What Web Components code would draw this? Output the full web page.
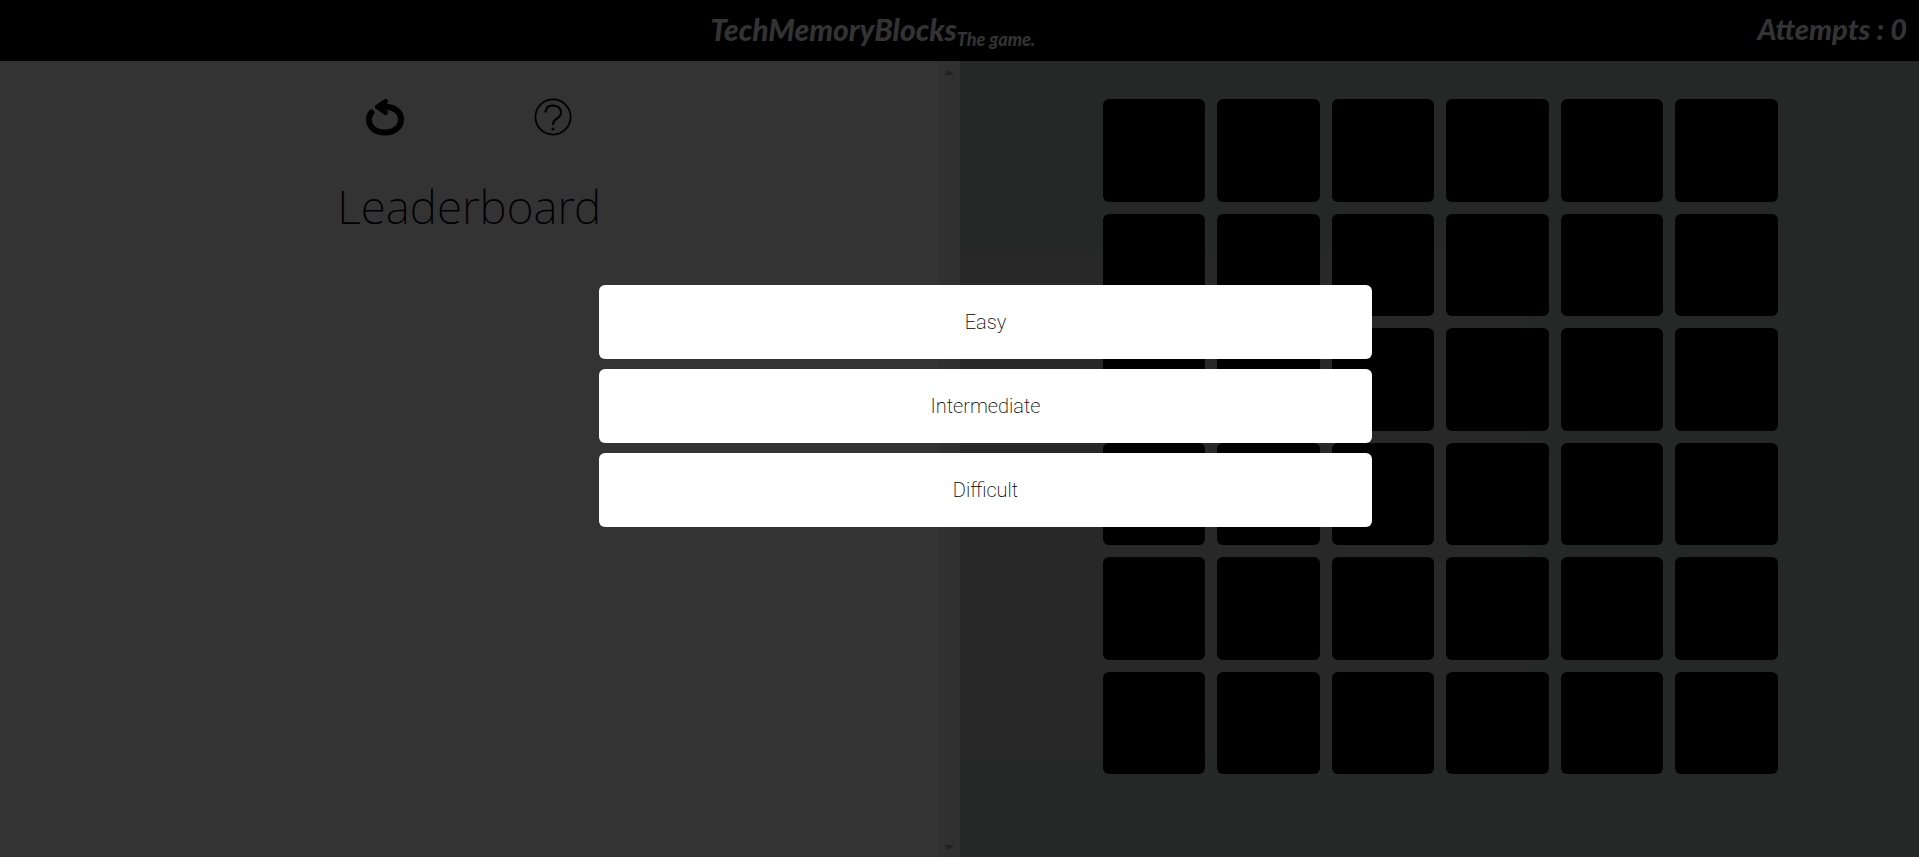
<!DOCTYPE html>
<html lang="en">
<head>
<meta charset="utf-8">
<title>TechMemoryBlocks</title>
<style>
html, body { margin: 0; height: 100%; }
body { font-family: Roboto, "Liberation Sans", sans-serif; background: #333; color: #000; overflow: hidden; }
</style>
</head>
<body>
<memory-app></memory-app>
<script>
const define = (name, html, setup) => customElements.define(name, class extends HTMLElement {
  constructor() {
    super();
    const t = document.createElement('template');
    t.innerHTML = html;
    this.attachShadow({ mode: 'open' }).append(t.content.cloneNode(true));
    if (setup) setup(this, this.shadowRoot);
  }
});

define('game-header', `
<style>
:host { display: flex; align-items: center; gap: 12px; min-height: 61px; padding: 0 12px 4px 0; box-sizing: border-box; background: #000; color: #333; font-family: Lato, sans-serif; font-style: italic; }
h1, p { margin: 0; line-height: 56px; font-weight: 900; white-space: nowrap; }
h1 { flex: 1; display: flex; align-items: center; justify-content: center; font-size: 30px; }
small { font-size: 18px; line-height: 24px; padding-top: 20px; }
p { font-size: 29px; }
</style>
<h1>TechMemoryBlocks<small>The game.</small></h1>
<p><slot></slot></p>`);

define('icon-button', `
<style>
:host { display: block; }
button { display: block; margin: 0; padding: 0; border: 0; background: none; color: #000; width: 38px; height: 38px; }
</style>
<button type="button"><slot></slot></button>`, (host, root) => {
  root.querySelector('button').setAttribute('aria-label', host.getAttribute('label') || '');
});

define('leader-board', `
<style>
:host { display: flex; min-width: 0; background: #333; }
section { flex: 1; min-width: 0; padding-top: 37px; }
nav { display: flex; justify-content: center; gap: 130px; }
svg { display: block; width: 38px; height: 38px; }
h2 { margin: 38px 0 0; text-align: center; font-family: "Noto Sans", "Open Sans", sans-serif; font-size: 46px; line-height: 64px; font-weight: 200; }
.bar { width: 21px; background: #303030; display: flex; flex-direction: column; justify-content: space-between; align-items: center; padding: 9px 0 7px; box-sizing: border-box; }
.bar svg { width: 10px; height: 5px; fill: #202020; }
</style>
<section>
<nav>
<icon-button label="Restart"><svg viewBox="0 0 38 38" fill="none" stroke="#000" stroke-linecap="round" stroke-linejoin="round"><path d="M5.500 14.500Q3 17.500 3 21.500C3 30 10 34.500 19 34.500S35 29 35 21.500C35 13.500 28 9 19 8.500" stroke-width="6"/><path d="M19.500 3.500L11.500 8.800L19.500 14.500" stroke-width="5" fill="#000"/></svg></icon-button>
<icon-button label="Help"><svg viewBox="0 0 38 38" fill="none" stroke="#000"><circle cx="19" cy="19" r="17.600" stroke-width="1.800"/><path d="M11.500 14.500Q12 7.500 19 7.500Q27 8 27 14.500Q27 18 23 20.500Q19 23 19 27" stroke-width="2.200"/><circle cx="19" cy="31" r="1.500" fill="#000" stroke="none"/></svg></icon-button>
</nav>
<h2>Leaderboard</h2>
</section>
<div class="bar" aria-hidden="true"><svg viewBox="0 0 10 5"><path d="M0 5L5 0L10 5Z"/></svg><svg viewBox="0 0 10 5"><path d="M0 0L5 5L10 0Z"/></svg></div>`);

define('memory-block', `
<style>
:host { display: block; aspect-ratio: 1; background: #000; border-radius: 6px; }
</style>`);

define('block-grid', `
<style>
:host { display: block; min-width: 0; padding: 38px 12px 38px 14px; background: linear-gradient(#282828, #282828) 0 191px / 59% 508px no-repeat #262827; }
.grid { display: grid; grid-template-columns: repeat(6, 1fr); gap: 12px; max-width: 675px; margin: 0 auto; }
</style>
<div class="grid"></div>`, (host, root) => {
  const grid = root.querySelector('.grid');
  for (let i = 0; i < 36; i++) grid.append(document.createElement('memory-block'));
});

define('level-menu', `
<style>
:host { display: flex; flex-direction: column; align-items: center; justify-content: center; gap: 10px; position: absolute; inset: 0; padding: 0 0 45px 52px; box-sizing: border-box; }
button { width: 100%; max-width: 773px; min-height: 74px; padding: 0; border: 0; border-radius: 6px; background: #fff; color: #000; font-family: Roboto, sans-serif; font-size: 20px; line-height: 24px; font-weight: 200; }
</style>
<button type="button">Easy</button>
<button type="button">Intermediate</button>
<button type="button">Difficult</button>`);

define('memory-app', `
<style>
:host { display: flex; flex-direction: column; min-height: 100vh; position: relative; }
main { flex: 1; display: grid; grid-template-columns: 1fr 1fr; }
</style>
<game-header>Attempts : 0</game-header>
<main><leader-board></leader-board><block-grid></block-grid></main>
<level-menu></level-menu>`);
</script>
</body>
</html>
